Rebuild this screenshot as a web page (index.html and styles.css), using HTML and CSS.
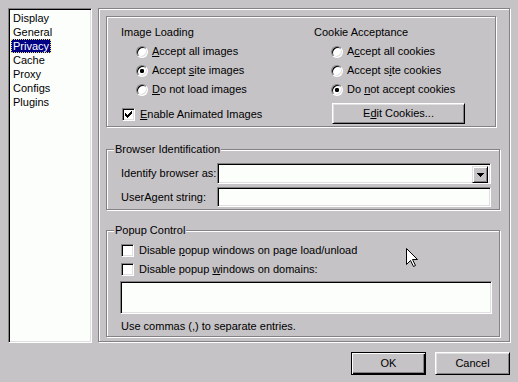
FILE: index.html
```html
<!DOCTYPE html>
<html>
<head>
<meta charset="utf-8">
<link rel="stylesheet" href="styles.css">
</head>
<body>
<div class="dialog">
  <div class="main">
    <div class="list">
      <div class="item"><span class="txt">Display</span></div>
      <div class="item"><span class="txt">General</span></div>
      <div class="item"><span class="txt sel">Privacy</span></div>
      <div class="item"><span class="txt">Cache</span></div>
      <div class="item"><span class="txt">Proxy</span></div>
      <div class="item"><span class="txt">Configs</span></div>
      <div class="item"><span class="txt">Plugins</span></div>
    </div>
    <div class="panel">
      <div class="group g-top">
        <div class="col col-img">
          <div class="title">Image Loading</div>
          <div class="opt ropt first"><span class="radio"></span><span><u>A</u>ccept all images</span></div>
          <div class="opt ropt"><span class="radio on"></span><span>Accept <u>s</u>ite images</span></div>
          <div class="opt ropt"><span class="radio"></span><span><u>D</u>o not load images</span></div>
          <div class="opt copt anim"><span class="check"><svg width="7" height="7" viewBox="0 0 7 7"><path d="M0 2h1v3H0zM1 3h1v3H1zM2 4h1v3H2zM3 3h1v3H3zM4 2h1v3H4zM5 1h1v3H5zM6 0h1v3H6z" fill="#000"/></svg></span><span><u>E</u>nable Animated Images</span></div>
        </div>
        <div class="col col-cookie">
          <div class="title">Cookie Acceptance</div>
          <div class="opt ropt first"><span class="radio"></span><span>A<u>c</u>cept all cookies</span></div>
          <div class="opt ropt"><span class="radio"></span><span>Accept s<u>i</u>te cookies</span></div>
          <div class="opt ropt"><span class="radio on"></span><span>Do <u>n</u>ot accept cookies</span></div>
          <div class="btn btn-edit">E<u>d</u>it Cookies...</div>
        </div>
      </div>
      <div class="group g-browser">
        <span class="legend">Browser Identification</span>
        <div class="frow"><span class="flabel">Identify browser as:</span><div class="field combo"><div class="combo-btn"><svg width="7" height="4" viewBox="0 0 7 4"><path d="M0 0h7v1H0zM1 1h5v1H1zM2 2h3v1H2zM3 3h1v1H3z" fill="#000"/></svg></div></div></div>
        <div class="frow second"><span class="flabel">UserAgent string:</span><div class="field text"></div></div>
      </div>
      <div class="group g-popup">
        <span class="legend">Popup Control</span>
        <div class="opt copt"><span class="check"></span><span>Disable <u>p</u>opup windows on page load/unload</span></div>
        <div class="opt copt"><span class="check"></span><span>Disable popup <u>w</u>indows on domains:</span></div>
        <div class="field area"></div>
        <div class="hint">Use commas (,) to separate entries.</div>
      </div>
    </div>
  </div>
  <div class="buttons">
    <div class="btn btn-default">OK</div>
    <div class="btn btn-dlg">Cancel</div>
  </div>
  <svg class="cursor" width="13" height="20" viewBox="0 0 13 20"><polygon points="0.5,0.5 0.5,16.5 4.5,12.5 7.5,18.5 9.5,17.5 6.5,11.5 11.5,11.5" fill="#fff" stroke="#000" stroke-width="1"/></svg>
</div>
</body>
</html>
```
FILE: styles.css
```css
* { box-sizing: border-box; }
html, body { margin: 0; padding: 0; }
body {
  width: 518px;
  height: 382px;
  background: #c6c3c6;
  font-family: "Liberation Sans", Arial, sans-serif;
  font-size: 11px;
  line-height: 13px;
  color: #000;
  overflow: hidden;
}
u { text-decoration: underline; text-underline-offset: 1px; }
.dialog {
  position: relative;
  padding: 8px 8px 0 8px;
  display: flex;
  flex-direction: column;
}
.main {
  display: flex;
  gap: 6px;
  height: 335px;
}
.list {
  width: 84px;
  height: 335px;
  background: #fcfefc;
  border: 1px solid;
  border-color: #848284 #fff #fff #848284;
  box-shadow: inset 1px 1px 0 #000, inset -1px -1px 0 #dfdfdf;
  padding: 2px 0 0 2px;
}
.item { height: 14px; line-height: 14px; }
.txt { display: inline-block; padding: 0 2px; height: 14px; }
.sel {
  background: #000084;
  color: #fff;
  outline: 1px dotted #e8e070;
  outline-offset: -1px;
}
.panel {
  width: 412px;
  height: 334px;
  border: 1px solid #848284;
  box-shadow: inset 1px 1px 0 #fff, 1px 1px 0 #fff;
  padding: 7px 9px 0 7px;
  display: flex;
  flex-direction: column;
  align-items: stretch;
}
.group {
  position: relative;
  border: 1px solid #848284;
  box-shadow: inset 1px 1px 0 #fff, 1px 1px 0 #fff;
}
.legend {
  position: absolute;
  top: -7px;
  left: 7px;
  padding: 0 1px;
  background: #c6c3c6;
  line-height: 13px;
}
.g-top {
  width: 390px;
  height: 111px;
  padding: 9px 0 0 14px;
  display: flex;
}
.col { display: flex; flex-direction: column; }
.col-img { width: 193px; }
.title { height: 13px; }
.opt { display: flex; align-items: center; height: 19px; }
.ropt { gap: 4px; }
.ropt.first { margin-top: 3px; }
.col-img .ropt { margin-left: 15px; }
.col-cookie .ropt { margin-left: 17px; }
.copt { gap: 5px; }
.anim { margin-top: 6px; margin-left: 1px; }
.radio {
  width: 12px;
  height: 12px;
  border-radius: 50%;
  border: 1px solid;
  border-color: #848284 #fff #fff #848284;
  box-shadow: inset 1px 1px 0 #000, inset -1px -1px 0 #dfdfdf;
  background: #fff;
  flex: none;
}
.radio.on { background: radial-gradient(circle at 50% 50%, #000 0 2px, #fff 2.3px); }
.check {
  width: 13px;
  height: 13px;
  border: 1px solid;
  border-color: #848284 #fff #fff #848284;
  box-shadow: inset 1px 1px 0 #000, inset -1px -1px 0 #dfdfdf;
  background: #fff;
  flex: none;
  display: flex;
  padding: 2px 0 0 2px;
}
.check svg { display: block; }
.btn {
  display: flex;
  align-items: center;
  justify-content: center;
  border: 1px solid;
  border-color: #fff #000 #000 #fff;
  box-shadow: inset 1px 1px 0 #dfdfdf, inset -1px -1px 0 #848284;
}
.btn-edit {
  width: 133px;
  height: 21px;
  margin-top: 4px;
  margin-left: 18px;
}
.g-browser {
  margin-top: 22px;
  height: 61px;
  padding: 13px 8px 2px 14px;
}
.frow { display: flex; align-items: center; }
.frow.second { margin-top: 3px; }
.flabel { width: 96px; }
.field {
  background: #fcfefc;
  border: 1px solid;
  border-color: #848284 #fff #fff #848284;
  box-shadow: inset 1px 1px 0 #000, inset -1px -1px 0 #dfdfdf;
}
.combo {
  width: 274px;
  height: 21px;
  display: flex;
  justify-content: flex-end;
  padding: 2px 2px 2px 0;
}
.combo-btn {
  width: 16px;
  height: 17px;
  background: #c6c3c6;
  border: 1px solid;
  border-color: #dfdfdf #000 #000 #dfdfdf;
  box-shadow: inset 1px 1px 0 #fff, inset -1px -1px 0 #848284;
  display: flex;
  align-items: center;
  justify-content: center;
}
.combo-btn svg { display: block; }
.text { width: 274px; height: 20px; }
.g-popup {
  margin-top: 20px;
  padding: 10px 8px 3px 14px;
}
.area {
  width: 372px;
  height: 33px;
  margin-top: 2px;
  margin-left: -1px;
}
.hint { margin-top: 6px; height: 13px; }
.buttons {
  display: flex;
  justify-content: flex-end;
  gap: 9px;
  margin-top: 9px;
}
.btn-default, .btn-dlg { width: 75px; height: 23px; }
.btn-default {
  border: 1px solid #000;
  box-shadow: inset 1px 1px 0 #fff, inset -1px -1px 0 #000, inset -2px -2px 0 #848284;
}
.cursor {
  position: absolute;
  left: 406px;
  top: 248px;
}
```
